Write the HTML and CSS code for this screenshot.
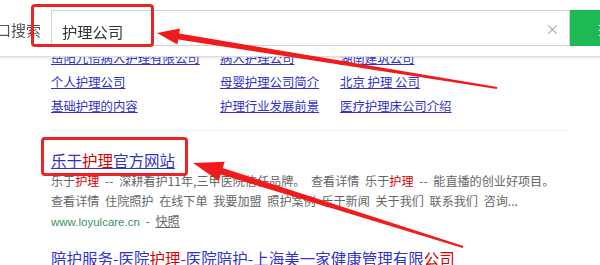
FILE: index.html
```html
<!DOCTYPE html>
<html lang="zh-CN">
<head>
<meta charset="utf-8">
<title>护理公司 - 搜索</title>
<link rel="stylesheet" href="styles.css">
</head>
<body>
<header class="topbar">
  <span class="label">口搜索</span>
  <div class="search">
    <span class="query">护理公司</span>
    <svg class="clear" viewBox="0 0 10 10" aria-hidden="true"><path d="M0.5 0.5 L9.5 9.5 M9.5 0.5 L0.5 9.5" stroke="#a8a8a8" stroke-width="1.2" fill="none"/></svg>
  </div>
  <div class="btn"><span class="btn-text">搜索</span></div>
  <span class="mark mark-search"></span>
</header>

<main class="content">
  <div class="related">
    <a href="#">岳阳九怡病人护理有限公司</a><a href="#">病人护理公司</a><a href="#">湖南建筑公司</a>
    <a href="#">个人护理公司</a><a href="#">母婴护理公司简介</a><a href="#">北京 护理 公司</a>
    <a href="#">基础护理的内容</a><a href="#">护理行业发展前景</a><a href="#">医疗护理床公司介绍</a>
  </div>

  <div class="result result-first">
    <h3 class="title"><span class="title-wrap"><a class="title-link" href="#">乐于<em>护理</em>官方网站</a><span class="mark mark-title"></span></span></h3>
    <p class="desc">乐于<em>护理</em> -- 深耕看护11年,三甲医院信任品牌。 查看详情 乐于<em>护理</em> -- 能直播的创业好项目。</p>
    <p class="desc">查看详情 住院照护 在线下单 我要加盟 照护案例 乐于新闻 关于我们 联系我们 咨询...</p>
    <p class="desc url-line"><span class="url">www.loyulcare.cn</span> - <a class="snap" href="#">快照</a></p>
  </div>

  <div class="result result-next">
    <h3 class="title"><a class="title-link" href="#">陪护服务-医院<em>护理</em>-医院陪护-上海美一家健康管理有限<em>公司</em></a></h3>
  </div>
</main>

<svg class="arrows" width="600" height="265" viewBox="0 0 600 265" aria-hidden="true">
  <polygon points="157,33 180,28.6 179.2,33.5 497.2,87 496.8,89 178.2,39.5 177.4,44.4"/>
  <polygon points="193,163 224.7,161.8 222.7,168 463.3,246 462.7,248 220.7,174.6 218.7,180.9"/>
</svg>
</body>
</html>
```

FILE: styles.css
```css
html, body {
  margin: 0;
  height: 265px;
  overflow: hidden;
  background: #fff;
}

body {
  font-family: "Noto Sans CJK SC", "Noto Sans", sans-serif;
  color: #333;
}

em {
  font-style: normal;
  color: #d90000;
}

.topbar {
  position: fixed;
  top: 0;
  left: 0;
  width: 640px;
  height: 57px;
  box-sizing: border-box;
  padding-top: 10px;
  display: flex;
  align-items: flex-start;
  background: #fff;
  border-bottom: 1px solid #dcdcdc;
  box-shadow: 0 1px 3px rgba(0, 0, 0, 0.12);
  z-index: 2;
}

.label {
  flex: 0 0 55px;
  margin-left: -4px;
  margin-top: 10px;
  font-size: 15px;
  line-height: 20px;
  color: #555;
  white-space: nowrap;
}

.search {
  flex: 0 0 519px;
  height: 36px;
  box-sizing: border-box;
  border: 1px solid #d2d2d2;
  display: flex;
  align-items: center;
  padding: 0 12px 0 10px;
}

.query {
  font-size: 15.3px;
  line-height: 20px;
  margin-top: 6px;
  color: #333;
}

.clear {
  margin-left: auto;
  width: 9px;
  height: 9px;
  margin-top: 2px;
}

.btn {
  flex: 0 0 60px;
  height: 36px;
  background: #1eb955;
  display: flex;
  align-items: center;
  padding-left: 28px;
  box-sizing: border-box;
}

.btn-text {
  color: #fff;
  font-size: 14px;
}

.mark {
  position: absolute;
  box-sizing: border-box;
  border: 3px solid #eb2228;
  border-radius: 4px;
  pointer-events: none;
}

.mark-search {
  left: 31px;
  top: 4px;
  width: 123px;
  height: 43px;
}

.content {
  padding: 46px 0 0 51px;
  width: 519px;
}

.related {
  display: grid;
  grid-template-columns: 169px 120px auto;
  font-size: 12.4px;
  line-height: 24px;
}

.related a {
  justify-self: start;
  white-space: nowrap;
  color: #3131cf;
  text-decoration: underline;
}

.result-first {
  margin-top: 12px;
  border-top: 1px solid #efefef;
  padding-top: 18px;
}

.result-next {
  margin-top: 15px;
}

.title {
  display: flex;
  margin: 0;
  font-size: 15.5px;
  line-height: 22px;
  font-weight: normal;
}

.title-wrap {
  position: relative;
}

.title-link {
  color: #3131cf;
  text-decoration: underline;
  white-space: nowrap;
}

.mark-title {
  left: -10px;
  right: -13px;
  top: -12px;
  bottom: -5px;
}

.desc {
  margin: 0;
  font-size: 12.1px;
  line-height: 20px;
  color: #666;
  word-spacing: 3px;
  white-space: nowrap;
}

.url {
  font-family: "Liberation Sans", Arial, sans-serif;
  font-size: 11.5px;
  color: #3b9160;
  word-spacing: 0;
}

.snap {
  color: #666;
  text-decoration: underline;
}

.arrows {
  position: fixed;
  top: 0;
  left: 0;
  z-index: 5;
  fill: #f21b1b;
  pointer-events: none;
}
```
